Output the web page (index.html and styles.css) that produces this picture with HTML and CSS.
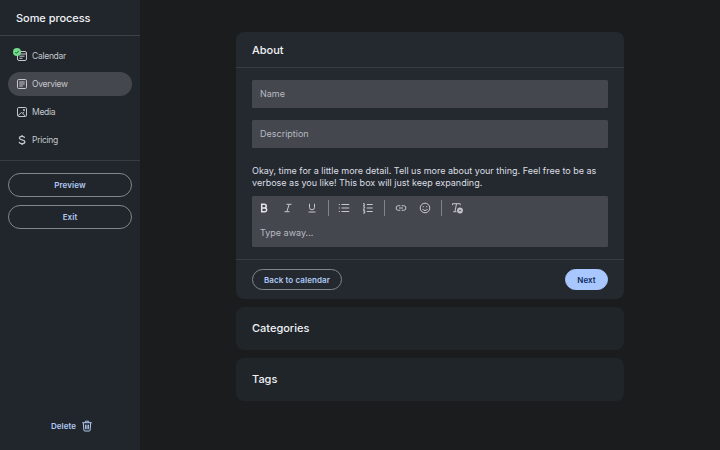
FILE: index.html
```html
<!DOCTYPE html>
<html lang="en">
<head>
<meta charset="utf-8">
<title>Some process</title>
<link rel="stylesheet" href="styles.css">
</head>
<body>
<aside class="sidebar">
  <h1 class="sidebar-title">Some process</h1>
  <nav class="nav">
    <a class="nav-item">
      <span class="nav-icon">
        <svg class="icon" viewBox="0 0 12 12"><rect x="1.5" y="1.5" width="9" height="9" rx="1.5"/><path d="M1.5 4h9M3.5 6.200h5M3.500 8.300h3"/></svg>
        <svg class="badge" viewBox="0 0 8 8"><circle cx="4" cy="4" r="4"/><path d="M2.300 4.100l1.200 1.200 2.300-2.400"/></svg>
      </span>
      Calendar
    </a>
    <a class="nav-item active">
      <span class="nav-icon"><svg class="icon" viewBox="0 0 12 12"><rect x="1.500" y="1.500" width="9" height="9" rx="1.200"/><path d="M3.300 4h5.400M3.300 6h5.400M3.300 8h3.500"/></svg></span>
      Overview
    </a>
    <a class="nav-item">
      <span class="nav-icon"><svg class="icon" viewBox="0 0 12 12"><rect x="1.500" y="1.500" width="9" height="9" rx="1.200"/><path d="M2 9.700l3.700-3.400 3.700 3.900M6.800 7.300l1.400-1.200M8 3v2M7 4h2"/></svg></span>
      Media
    </a>
    <a class="nav-item">
      <span class="nav-icon"><svg class="icon dollar" viewBox="0 0 12 12"><path d="M8.700 3.900C8.400 2.900 7.400 2.400 6 2.400c-1.500 0-2.600.6-2.600 1.700C3.400 6.500 8.800 5.300 8.800 7.900c0 1.100-1.200 1.700-2.800 1.700-1.600 0-2.600-.6-2.900-1.700M6 .9v1.500M6 9.600v1.500"/></svg></span>
      Pricing
    </a>
  </nav>
  <div class="sidebar-actions">
    <button class="button">Preview</button>
    <button class="button">Exit</button>
  </div>
  <button class="delete">Delete
    <svg class="icon" viewBox="0 0 12 12"><path d="M1.300 2.700h9.400M4 2.500l.5-1.300h3L8 2.500M2.300 3l.6 7.200c0 .5.300.8.800.8h4.600c.5 0 .8-.3.800-.8L9.700 3M4.500 4.700l.2 4.500M6 4.700v4.500M7.500 4.700l-.2 4.500"/></svg>
  </button>
</aside>
<main class="main">
  <section class="card open">
    <h2 class="card-title">About</h2>
    <div class="card-body">
      <div class="field">Name</div>
      <div class="field">Description</div>
      <p class="hint">Okay, time for a little more detail. Tell us more about your thing. Feel free to be as verbose as you like! This box will just keep expanding.</p>
      <div class="editor">
        <div class="toolbar">
          <svg class="icon bold" viewBox="0 0 12 12"><path d="M3.700 2.200h2.700a1.800 1.800 0 0 1 0 3.700H3.700zM3.700 5.900h3a1.900 1.900 0 0 1 0 3.900h-3z"/></svg>
          <svg class="icon" viewBox="0 0 12 12"><path d="M4.500 2.300h5M2.500 9.700h5M7.200 2.300l-2.400 7.400"/></svg>
          <svg class="icon" viewBox="0 0 12 12"><path d="M3.500 1.800v3.500a2.500 2.500 0 0 0 5 0V1.800M2.500 10h7"/></svg>
          <span class="separator"></span>
          <svg class="icon" viewBox="0 0 12 12"><path d="M3.500 2.500h7.700M3.500 6h7.700M3.500 9.500h7.700M.8 2.500h1.100M.8 6h1.100M.8 9.500h1.100"/></svg>
          <svg class="icon" viewBox="0 0 12 12"><path d="M4.800 2.500h5.900M4.800 6h5.900M4.800 9.500h5.900M1.200 1.500h1v2.300M1 3.800h2M1.200 5h1.400v1L1.200 7.200h1.600M1.200 8.500h1.500v2.600H1.200M1.600 9.800h1"/></svg>
          <span class="separator"></span>
          <svg class="icon" viewBox="0 0 12 12"><path d="M5.300 3.700H3.400a2.300 2.300 0 0 0 0 4.600h1.900M6.700 3.700h1.900a2.300 2.300 0 0 1 0 4.600H6.700M4 6h4"/></svg>
          <svg class="icon" viewBox="0 0 12 12"><circle cx="6" cy="6" r="4.800"/><path d="M4.300 4.200v1M7.700 4.200v1M3.500 7c1 2 4 2 5 0"/></svg>
          <span class="separator"></span>
          <svg class="icon" viewBox="0 0 12 12"><path d="M1.500 3.200V1.700h7.700v1.500M5.500 1.700L4 9.500M2.300 9.700h3.200"/><circle class="solid" cx="9" cy="8.500" r="2.900"/><path class="cutout" d="M8.200 7.700l1.600 1.600M9.800 7.700L8.200 9.300"/></svg>
        </div>
        <div class="placeholder">Type away...</div>
      </div>
    </div>
    <footer class="card-footer">
      <button class="button">Back to calendar</button>
      <button class="button primary">Next</button>
    </footer>
  </section>
  <section class="card"><h2 class="card-title">Categories</h2></section>
  <section class="card"><h2 class="card-title">Tags</h2></section>
</main>
</body>
</html>
```
FILE: styles.css
```css
* { box-sizing: border-box; }

body {
  margin: 0;
  display: flex;
  height: 450px;
  overflow: hidden;
  background: #1a1c1d;
  color: #c5c7cc;
  font: 9px/12px Inter, "Liberation Sans", sans-serif;
}

h1, h2, p { margin: 0; }

button {
  padding: 0;
  border: 0;
  background: none;
  font: inherit;
}

.icon {
  display: block;
  flex: none;
  width: 12px;
  height: 12px;
  overflow: visible;
  fill: none;
  stroke: currentColor;
  stroke-width: 1;
}

.sidebar {
  display: flex;
  flex-direction: column;
  flex: none;
  width: 140px;
  background: #20262b;
}

.sidebar-title {
  height: 36px;
  padding-left: 16px;
  border-bottom: 1px solid #3c4145;
  color: #eff1f4;
  font-size: 11px;
  font-weight: 550;
  letter-spacing: -0.05px;
  line-height: 36px;
}

.nav {
  display: flex;
  flex-direction: column;
  gap: 4px;
  height: 125px;
  padding: 8px;
  border-bottom: 1px solid #363c41;
}

.nav-item {
  display: flex;
  flex: none;
  align-items: center;
  gap: 4px;
  height: 24px;
  padding-left: 8px;
  border-radius: 12px;
  font-size: 8.5px;
  letter-spacing: -0.28px;
}

.nav-item.active { background: #45474e; }

.nav-icon { position: relative; }

.dollar { stroke-width: 1.3; }

.badge {
  position: absolute;
  top: -2px;
  left: -3px;
  width: 8px;
  height: 8px;
  fill: #72dc8c;
}

.badge path {
  fill: none;
  stroke: #174528;
  stroke-width: 0.9;
}

.sidebar-actions {
  display: flex;
  flex-direction: column;
  gap: 8px;
  padding: 11.5px 8px;
}

.button {
  height: 21px;
  border: 1px solid #81868d;
  border-radius: 12px;
  color: #b0c9f5;
  font-size: 8px;
  font-weight: 600;
  letter-spacing: 0.1px;
}

.sidebar-actions .button { height: 24px; }

.delete {
  display: flex;
  justify-content: center;
  align-items: center;
  gap: 5px;
  margin-top: auto;
  padding: 0 0 18px 4px;
  color: #b0c9f5;
  font-size: 8px;
  font-weight: 600;
}

.main {
  display: flex;
  flex: 1;
  flex-direction: column;
  align-items: center;
  gap: 8px;
  padding-top: 32px;
}

.card {
  width: 388px;
  height: 43px;
  border-radius: 8px;
  background: #20252a;
}

.card.open {
  height: 267px;
  background: #242930;
}

.card-title {
  padding-left: 16px;
  color: #eff1f4;
  font-size: 11px;
  font-weight: 550;
  line-height: 43px;
}

.open .card-title {
  height: 36px;
  border-bottom: 1px solid #373d42;
  line-height: 36px;
}

.card-body {
  height: 191px;
  padding: 12px 16px 0;
}

.field {
  height: 28px;
  margin-bottom: 12px;
  padding-left: 8px;
  border-radius: 1.5px;
  background: #45474e;
  color: #b7bac1;
  line-height: 28px;
}

.hint {
  margin-top: 17px;
  color: #dcdee2;
}

.editor {
  height: 51px;
  margin-top: 7px;
  border-radius: 1.5px;
  background: #45474e;
}

.toolbar {
  display: flex;
  align-items: center;
  gap: 12px;
  height: 24px;
  padding-left: 6px;
}

.bold {
  color: #e3e4e8;
  stroke-width: 1.5;
}

.separator {
  width: 1px;
  height: 16px;
  margin: 0 -2.4px 0 -2.2px;
  background: #81848b;
}

.solid {
  fill: currentColor;
  stroke: none;
}

.cutout { stroke: #45474e; }

.placeholder {
  padding: 7px 8px;
  color: #b7bac1;
}

.card-footer {
  display: flex;
  justify-content: space-between;
  height: 40px;
  padding: 9px 16px;
  border-top: 1px solid #373d42;
}

.card-footer .button { width: 90px; }

.card-footer .primary {
  width: 43px;
  border-color: #a9c7ff;
  background: #a9c7ff;
  color: #0c2d60;
}
```
